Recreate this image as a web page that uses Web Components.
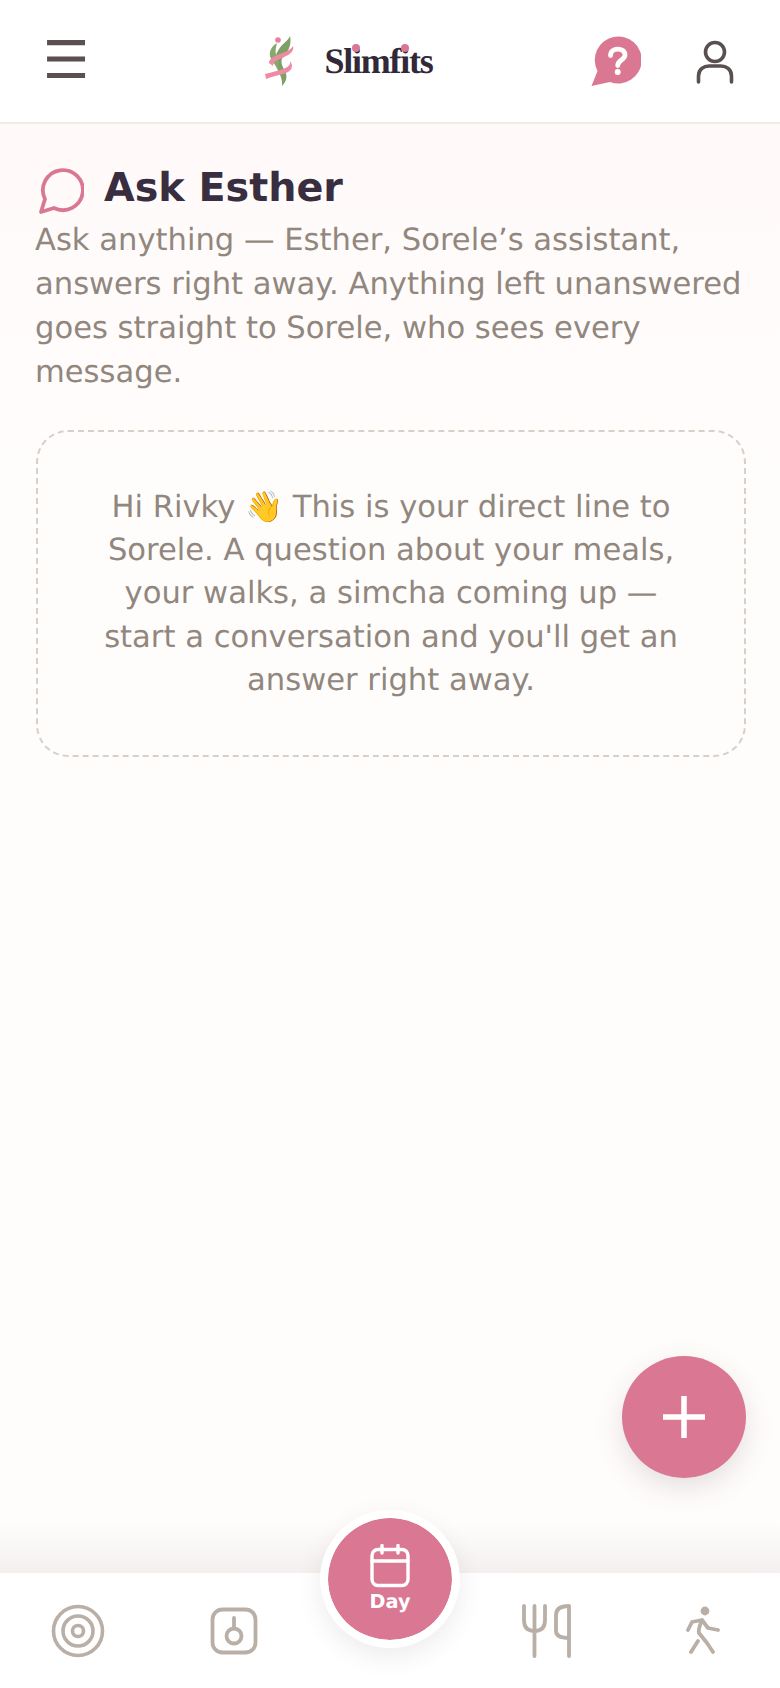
<!DOCTYPE html>
<html>
<head>
<meta charset="utf-8">
<title>Ask Esther</title>
<style>
  html, body { margin: 0; height: 1688px; overflow: hidden; }
  body { font-family: "DejaVu Sans", sans-serif; text-rendering: geometricPrecision; }
</style>
</head>
<body>
<app-shell>
  <top-bar slot="top"></top-bar>
  <page-intro slot="main" heading="Ask Esther">Ask anything — Esther, Sorele’s assistant, answers right away. Anything left unanswered goes straight to Sorele, who sees every message.</page-intro>
  <empty-note slot="main">Hi Rivky 👋 This is your direct line to Sorele. A question about your meals, your walks, a simcha coming up — start a conversation and you'll get an answer right away.</empty-note>
  <add-button slot="fab"></add-button>
  <bottom-nav slot="nav"></bottom-nav>
</app-shell>

<script>
const define = (name, html) => {
  const template = document.createElement('template')
  template.innerHTML = html
  window.customElements.define(name, class extends HTMLElement {
    constructor () {
      super()
      this.attachShadow({ mode: 'open' })
      this.shadowRoot.appendChild(template.content.cloneNode(true))
      const title = this.shadowRoot.querySelector('[data-heading]')
      if (title) title.textContent = this.getAttribute('heading')
    }
  })
}

define('app-shell', `
  <style>
    :host {
      display: flex;
      flex-direction: column;
      position: relative;
      height: 1688px;
      overflow: hidden;
      background: linear-gradient(#fff9f8 0, #fffdfc 500px);
    }
    main {
      flex: 1;
      display: flex;
      flex-direction: column;
      gap: 35px;
      padding: 39px 34px 0 36px;
      position: relative;
    }
    .fade {
      position: absolute;
      left: 0;
      right: 0;
      bottom: 115px;
      height: 50px;
      background: linear-gradient(rgba(120,110,100,0), rgba(120,110,100,.09));
    }
  </style>
  <slot name="top"></slot>
  <main><slot name="main"></slot></main>
  <div class="fade"></div>
  <slot name="fab"></slot>
  <slot name="nav"></slot>
`)

define('top-bar', `
  <style>
    :host {
      display: flex;
      align-items: center;
      height: 122px;
      flex: none;
      background: #fff;
      border-bottom: 2px solid #f2ece8;
      position: relative;
    }
    .menu {
      width: 132px;
      text-align: center;
      font-size: 52px;
      line-height: 1;
      color: #5a5050;
    }
    .brand {
      flex: 1;
      display: flex;
      align-items: center;
      justify-content: center;
      gap: 29px;
      padding-left: 8px;
    }
    .word {
      font: bold 36px "Liberation Serif", serif;
      letter-spacing: -1.25px;
      color: #312838;
    }
    .word span { position: relative; }
    .word span::after {
      content: '';
      position: absolute;
      left: 50%;
      top: 3px;
      width: 8px;
      height: 8px;
      margin-left: -4px;
      border-radius: 50%;
      background: #da7893;
    }
    .actions {
      width: 222px;
      display: flex;
      align-items: center;
      gap: 55px;
      padding: 2px 0 0 33px;
      box-sizing: border-box;
    }
    svg { display: block; flex: none; }
  </style>
  <div class="menu">☰</div>
  <div class="brand">
    <svg width="30" height="52" viewBox="0 0 30 52">
      <circle cx="13" cy="5" r="2.800" fill="#e8809a"/>
      <path d="M25 1C27 10 23 17 18 22C15 26 17 31 20 36C23 42 21 47 17 51C18 44 14 38 12 33C9 26 10 20 14 14C17 9 23 6 25 1Z" fill="#7da164"/>
      <path d="M12 8C7 11 4 16 5 21C6 26 11 30 13 35C15 28 13 24 11 20C10 16 11 12 12 8Z" fill="#86a96c"/>
      <path d="M28 11C30 17 22 21 15 24C10 26 8 28 8 31L4 28C4 24 9 21 15 19C20 17 26 15 28 11Z" fill="#ee8aa3"/>
      <path d="M25 26C29 31 27 37 18 39C11 41 5 42 1 44L0 39C7 37 13 36 18 34C23 32 26 30 25 26Z" fill="#ee8aa3"/>
    </svg>
    <div class="word">Sl<span>i</span>mf<span>i</span>ts</div>
  </div>
  <div class="actions">
    <svg width="50" height="52" viewBox="0 0 50 52">
      <path d="M0.500 50L6.500 35A23.500 23.500 0 1 1 19 46Z" fill="#da7893"/>
      <path d="M19.500 19.500C19.500 11 34 11 34 19C34 24 26.700 24 26.700 29.500" fill="none" stroke="#fff" stroke-width="4.800" stroke-linecap="round"/>
      <circle cx="26.700" cy="36" r="3" fill="#fff"/>
    </svg>
    <svg width="38" height="46" viewBox="0 0 38 46">
      <circle cx="19" cy="13" r="9.500" fill="none" stroke="#5a5050" stroke-width="3.600"/>
      <path d="M2.500 43V37C2.500 30 8 27 13 27H25C30 27 35.500 30 35.500 37V43" fill="none" stroke="#5a5050" stroke-width="3.600" stroke-linecap="round"/>
    </svg>
  </div>
`)

define('page-intro', `
  <style>
    :host { display: block; color: #91877e; font-size: 30.6px; line-height: 44px; margin-left: -1px; }
    .head {
      display: flex;
      align-items: center;
      gap: 20px;
      height: 50px;
      margin-bottom: 6px;
    }
    h1 {
      margin: 0;
      font-size: 39.680px;
      font-weight: bold;
      color: #382e40;
      line-height: 44px;
    }
    svg { display: block; flex: none; margin: 5px 0 0 3px; }
  </style>
  <div class="head">
    <svg width="46" height="46" viewBox="0 0 46 46">
      <path d="M3 44L7 31A20 20 0 1 1 16 40Z" fill="none" stroke="#da7893" stroke-width="3.800" stroke-linejoin="round"/>
    </svg>
    <h1 data-heading></h1>
  </div>
  <slot></slot>
`)

define('empty-note', `
  <style>
    :host {
      display: block;
      box-sizing: border-box;
      height: 327px;
      padding: 54px 48px 0;
      border: 2px dashed #d8cfc8;
      border-radius: 32px;
      font-size: 30.6px;
      line-height: 43.2px;
      color: #91877e;
      text-align: center;
    }
  </style>
  <slot></slot>
`)

define('add-button', `
  <style>
    :host {
      display: flex;
      align-items: center;
      justify-content: center;
      position: absolute;
      right: 34px;
      bottom: 210px;
      width: 124px;
      height: 122px;
      border-radius: 50%;
      background: #da7893;
      box-shadow: 0 10px 28px rgba(90,70,70,.16);
    }
  </style>
  <svg width="42" height="42" viewBox="0 0 42 42"><path d="M21 0V42M0 21H42" stroke="#fff" stroke-width="5.500"/></svg>
`)

define('bottom-nav', `
  <style>
    :host {
      display: grid;
      grid-template-columns: repeat(5, 1fr);
      align-items: center;
      flex: none;
      height: 115px;
      box-sizing: border-box;
      background: #fff;
      position: relative;
    }
    .item { display: flex; justify-content: center; }
    .shift { padding-left: 2px; }
    svg { display: block; }
    .day {
      position: absolute;
      left: 320px;
      top: -63px;
      width: 124px;
      height: 122px;
      border: 8px solid #fff;
      border-radius: 50%;
      background: #da7893;
      background-clip: padding-box;
      box-shadow: 0 8px 24px rgba(90,70,70,.1);
      display: flex;
      flex-direction: column;
      align-items: center;
      color: #fff;
      font-size: 19.200px;
      font-weight: bold;
      line-height: 24px;
    }
    .day svg { margin-top: 26px; margin-bottom: 2px; }
  </style>
  <div class="item">
    <svg width="54" height="54" viewBox="0 0 54 54" fill="none" stroke="#b9afa6" stroke-width="3.600">
      <circle cx="27" cy="27" r="24.500"/><circle cx="27" cy="27" r="15"/><circle cx="27" cy="27" r="5.500"/>
    </svg>
  </div>
  <div class="item">
    <svg width="50" height="50" viewBox="0 0 50 50" fill="none" stroke="#b9afa6" stroke-width="3.800" stroke-linecap="round">
      <rect x="3.500" y="3.500" width="43" height="43" rx="10"/><circle cx="25" cy="30" r="7.500"/><path d="M25 12V22"/>
    </svg>
  </div>
  <div class="item"></div>
  <div class="item shift">
    <svg width="50" height="54" viewBox="0 0 50 54" fill="none" stroke="#b9afa6" stroke-width="3.800" stroke-linecap="round" stroke-linejoin="round">
      <path d="M2 2V16C2 24 6 27 12.500 27C19 27 23 24 23 16V2M12.500 2V52"/>
      <path d="M47 52V2C38 2 34 5 34 11V27C34 32 40 34 47 34"/>
    </svg>
  </div>
  <div class="item shift">
    <svg width="34" height="50" viewBox="0 0 34 50" fill="none" stroke="#b9afa6" stroke-width="3.800" stroke-linecap="round" stroke-linejoin="round">
      <circle cx="19" cy="5" r="4.400" fill="#b9afa6" stroke="none"/>
      <path d="M2 24L6 16L16 14C14 19 12 23 13 27L21 37L27 46M16 14L22 22L32 24M12 35L5 46"/>
    </svg>
  </div>
  <div class="day">
    <svg width="40" height="44" viewBox="0 0 40 44" fill="none" stroke="#fff" stroke-width="3.400" stroke-linecap="round">
      <rect x="2" y="5.500" width="36" height="36" rx="6"/><path d="M2 17H38M12 1.500V9M28 1.500V9"/>
    </svg>
    Day
  </div>
`)
</script>
</body>
</html>
